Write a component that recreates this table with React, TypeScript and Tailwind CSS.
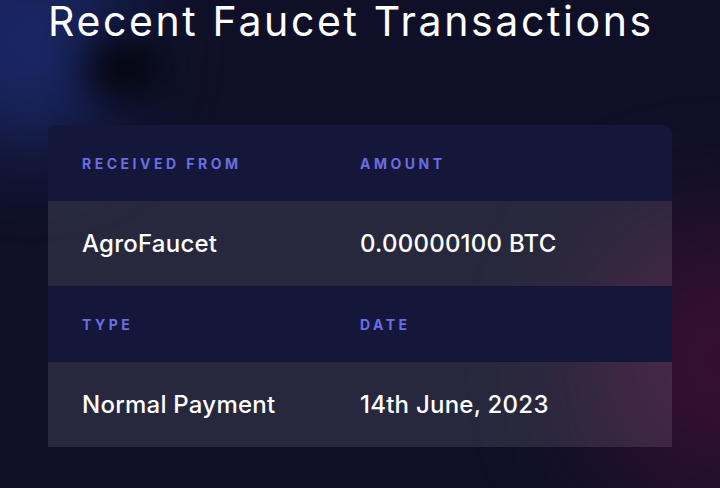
import React from "react";

const rows = [
  { labels: ["Received From", "Amount"], values: ["AgroFaucet", "0.00000100 BTC"] },
  { labels: ["Type", "Date"], values: ["Normal Payment", "14th June, 2023"] },
];

export default function App() {
  return (
    <div className="relative w-[720px] h-[488px] overflow-hidden bg-[#0f1027] font-['Inter',sans-serif]">
      {/* background glows */}
      <div className="absolute -left-[70px] -top-[70px] w-[200px] h-[220px] rounded-full bg-[#1d2d74] blur-[45px] opacity-80" />
      <div className="absolute left-[85px] top-[35px] w-[80px] h-[65px] rounded-full bg-[#04050d] blur-[20px]" />
      <div className="absolute -right-[130px] top-[220px] w-[260px] h-[280px] rounded-full bg-[#3a0f35] blur-[60px] opacity-90" />

      <div className="relative px-12 pt-px">
        <h1 className="text-[41px] leading-none font-normal tracking-[0.064em] text-white whitespace-nowrap">
          Recent Faucet Transactions
        </h1>

        <div className="mt-[83px] w-[624px] rounded-t-lg overflow-hidden">
          {rows.map((row, i) => (
            <div key={i}>
              <div className="grid grid-cols-2 h-[76px] items-center bg-[#14163a] px-[34px]">
                {row.labels.map((l) => (
                  <span
                    key={l}
                    className="text-[14px] font-bold uppercase tracking-[0.25em] text-[#6a6ee0]"
                  >
                    {l}
                  </span>
                ))}
              </div>
              <div className="grid grid-cols-2 h-[85px] items-center bg-white/10 px-[34px]">
                {row.values.map((v) => (
                  <span key={v} className="text-[24px] font-medium tracking-[0.01em] text-white">
                    {v}
                  </span>
                ))}
              </div>
            </div>
          ))}
        </div>
      </div>
    </div>
  );
}
